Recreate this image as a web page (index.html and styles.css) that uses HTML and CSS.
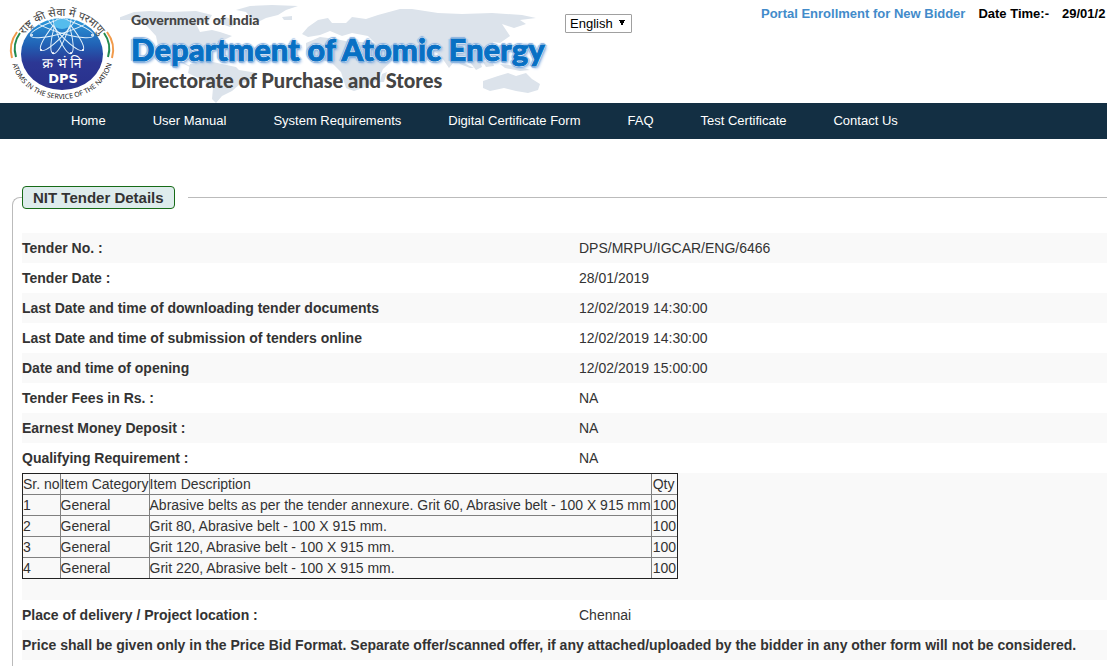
FILE: index.html
```html
<!DOCTYPE html>
<html lang="en">
<head>
<meta charset="utf-8">
<title>NIT Tender Details</title>
<link rel="stylesheet" href="styles.css">
</head>
<body>
<header class="top">
  <div class="brand">
    <svg class="map" viewBox="120 0 430 103" aria-hidden="true">
      <path d="M118 18 L134 12 L150 11 L170 12 L196 11 L212 15 L208 22 L196 24 L200 32 L212 30 L220 32 L232 36 L224 40 L216 43 L206 50 L199 54 L196 60 L188 57 L180 60 L188 65 L198 68 L190 67 L176 60 L166 54 L158 46 L156 36 L146 25 L134 20 L120 20Z"/>
      <path d="M236 10 L250 6 L272 5 L298 6 L286 10 L278 15 L266 18 L258 22 L250 17 L246 12Z M214 21 L226 17 L238 23 L230 27Z M282 17 L292 16 L292 20 L284 20Z"/>
      <path d="M190 64 L208 61 L222 64 L236 67 L239 70 L257 73 L251 80 L240 84 L232 91 L222 96 L216 103 L212 99 L213 88 L202 80 L188 73Z"/>
      <path d="M302 34 L308 27 L318 20 L328 18 L332 23 L346 23 L352 17 L366 19 L378 15 L400 9 L412 9 L438 13 L462 14 L492 13 L522 15 L536 18 L520 20 L526 24 L514 28 L502 24 L510 36 L500 43 L493 42 L496 51 L487 60 L479 58 L482 67 L476 70 L467 58 L458 57 L449 68 L440 55 L428 48 L416 52 L405 56 L390 47 L376 44 L368 36 L352 33 L342 36 L330 31 L320 35 L308 37Z"/>
      <path d="M306 43 L320 37 L336 39 L350 42 L372 42 L385 47 L394 59 L383 69 L378 80 L366 87 L354 91 L346 88 L341 72 L331 62 L314 59 L306 51Z"/>
      <path d="M483 81 L498 76 L508 73 L516 76 L526 73 L532 79 L540 84 L538 90 L528 93 L516 91 L504 88 L490 91 L483 88Z"/>
      <path d="M456 59 L466 64 L474 68 L470 68 L460 64Z M483 62 L492 60 L494 66 L486 67Z M500 64 L518 66 L530 70 L520 71 L505 68Z M382 74 L387 72 L384 82 L380 82Z"/>
    </svg>
    <svg class="emblem" viewBox="0 0 124 103" role="img" aria-label="DPS emblem">
      <defs>
        <linearGradient id="disk" x1="0" y1="0" x2="0" y2="1">
          <stop offset="0" stop-color="#2a9bdc"/><stop offset=".38" stop-color="#2160b4"/>
          <stop offset=".62" stop-color="#2c3794"/><stop offset="1" stop-color="#29308c"/>
        </linearGradient>
        <clipPath id="inside"><ellipse cx="62" cy="54" rx="41" ry="36"/></clipPath>
        <path id="upper" d="M17 57 A45 41 0 0 1 107 57"/>
        <path id="lower" d="M11 54 A51 45 0 0 0 113 54"/>
      </defs>
      <ellipse cx="62" cy="54" rx="41" ry="36" fill="url(#disk)"/>
      <g clip-path="url(#inside)">
        <g fill="none" stroke="#e4f2fb" stroke-width="1">
          <ellipse cx="62" cy="26" rx="33" ry="7" transform="rotate(17 62 26)"/>
          <ellipse cx="62" cy="26" rx="32" ry="7" transform="rotate(49 62 26)"/>
          <ellipse cx="62" cy="26" rx="29" ry="7" transform="rotate(72 62 26)"/>
          <ellipse cx="62" cy="26" rx="29" ry="7" transform="rotate(108 62 26)"/>
          <ellipse cx="62" cy="26" rx="32" ry="7" transform="rotate(131 62 26)"/>
          <ellipse cx="62" cy="26" rx="33" ry="7" transform="rotate(163 62 26)"/>
        </g>
        <ellipse cx="62" cy="24" rx="8" ry="5" fill="#55bced"/>
        <g fill="#fff">
          <circle cx="32" cy="35" r="1"/><circle cx="41" cy="50" r="1"/><circle cx="53" cy="53" r="1"/>
          <circle cx="71" cy="53" r="1"/><circle cx="83" cy="50" r="1"/><circle cx="92" cy="35" r="1"/>
        </g>
      </g>
      <g fill="none" stroke-width="2">
        <path d="M17 32 Q8 44 12 58 M107 32 Q116 44 112 58" stroke="#f19a4b"/>
        <path d="M20 33 Q12 44 16 57 M104 33 Q112 44 108 57" stroke="#238b50"/>
      </g>
      <text class="emblem-hindi" x="62" y="68">क्र भं नि</text>
      <text class="emblem-dps" x="63" y="83">DPS</text>
      <text class="emblem-upper"><textPath href="#upper" startOffset="50%">राष्ट्र की सेवा में परमाणु</textPath></text>
      <text class="emblem-lower"><textPath href="#lower" startOffset="50%">ATOMS IN THE SERVICE OF THE NATION</textPath></text>
    </svg>
    <div class="titles">
      <p class="gov">Government of India</p>
      <h1 class="dept">Department of Atomic Energy</h1>
      <p class="direct">Directorate of Purchase and Stores</p>
    </div>
  </div>
  <select class="language" aria-label="Language"><option>English</option></select>
  <div class="session">
    <a class="enroll" href="#">Portal Enrollment for New Bidder</a>
    <span>Date Time:-</span>
    <time class="clock">29/01/2</time>
  </div>
</header>
<nav class="menu">
  <a href="#">Home</a>
  <a href="#">User Manual</a>
  <a href="#">System Requirements</a>
  <a href="#">Digital Certificate Form</a>
  <a href="#">FAQ</a>
  <a href="#">Test Certificate</a>
  <a href="#">Contact Us</a>
</nav>
<main class="page">
  <fieldset class="details">
    <legend class="legend"><span class="legend-box">NIT Tender Details</span></legend>
    <div class="rows">
      <div class="row"><b>Tender No. :</b><span>DPS/MRPU/IGCAR/ENG/6466</span></div>
      <div class="row"><b>Tender Date :</b><span>28/01/2019</span></div>
      <div class="row"><b>Last Date and time of downloading tender documents</b><span>12/02/2019 14:30:00</span></div>
      <div class="row"><b>Last Date and time of submission of tenders online</b><span>12/02/2019 14:30:00</span></div>
      <div class="row"><b>Date and time of opening</b><span>12/02/2019 15:00:00</span></div>
      <div class="row"><b>Tender Fees in Rs. :</b><span>NA</span></div>
      <div class="row"><b>Earnest Money Deposit :</b><span>NA</span></div>
      <div class="row"><b>Qualifying Requirement :</b><span>NA</span></div>
      <div class="row row-items">
        <table class="items">
          <thead><tr><th>Sr. no</th><th>Item Category</th><th>Item Description</th><th>Qty</th></tr></thead>
          <tbody>
            <tr><td>1</td><td>General</td><td>Abrasive belts as per the tender annexure. Grit 60, Abrasive belt - 100 X 915 mm</td><td>100</td></tr>
            <tr><td>2</td><td>General</td><td>Grit 80, Abrasive belt - 100 X 915 mm.</td><td>100</td></tr>
            <tr><td>3</td><td>General</td><td>Grit 120, Abrasive belt - 100 X 915 mm.</td><td>100</td></tr>
            <tr><td>4</td><td>General</td><td>Grit 220, Abrasive belt - 100 X 915 mm.</td><td>100</td></tr>
          </tbody>
        </table>
      </div>
      <div class="row"><b>Place of delivery / Project location :</b><span>Chennai</span></div>
      <div class="row row-note"><b>Price shall be given only in the Price Bid Format. Separate offer/scanned offer, if any attached/uploaded by the bidder in any other form will not be considered.</b></div>
    </div>
  </fieldset>
</main>
</body>
</html>
```
FILE: styles.css
```css
* { box-sizing: border-box; }
body {
  margin: 0;
  background: #fff;
  color: #333;
  font: 14px/20px "Liberation Sans", Arial, sans-serif;
  overflow-x: hidden;
}
.top {
  display: flex;
  align-items: flex-start;
  height: 103px;
  overflow: hidden;
}
.brand {
  display: flex;
  position: relative;
  flex: 0 0 565px;
}
.map {
  position: absolute;
  left: 120px;
  top: 0;
  width: 430px;
  height: 103px;
  fill: #dce3eb;
}
.emblem { width: 124px; height: 103px; flex: none; }
.emblem text { text-anchor: middle; }
.emblem-hindi { font: 14px "Noto Sans Devanagari", "Noto Sans", sans-serif; fill: #fff; }
.emblem-dps { font: bold 13px "DejaVu Sans", sans-serif; fill: #fff; }
.emblem-upper { font: 11px "Noto Sans Devanagari", "Noto Sans", sans-serif; fill: #444; }
.emblem-lower { font: 7px "Noto Sans", sans-serif; fill: #222; }
.titles {
  position: relative;
  padding: 12px 0 0 7px;
  font-family: "Lato Black", Lato, sans-serif;
  font-weight: 900;
  white-space: nowrap;
  color: #444;
}
.titles p, .titles h1 { margin: 0; }
.gov { font-size: 14px; line-height: 16px; }
.dept {
  font-size: 31px;
  line-height: 42px;
  font-weight: 900;
  color: #0870c4;
  -webkit-text-stroke: 1px #0870c4;
  text-shadow: 1px 0 #fff, -1px 0 #fff, 0 1px #fff, 0 -1px #fff,
    2px 0 1px #8bb2e0, -2px 0 1px #8bb2e0, 0 2px 1px #8bb2e0, 0 -2px 1px #8bb2e0, 2px 2px 3px #8bb2e0;
}
.direct { font-size: 20px; line-height: 20px; }
.language {
  appearance: none;
  flex: none;
  width: 67px;
  height: 19px;
  margin-top: 14px;
  padding: 0 4px;
  border: 1px solid #a0a0a0;
  border-radius: 1px;
  color: #000;
  font: 13px/17px "Liberation Sans", Arial, sans-serif;
  background:
    linear-gradient(to bottom right, #000 50%, transparent 50%) 56px 5px / 3px 6px no-repeat,
    linear-gradient(to bottom left, #000 50%, transparent 50%) 53px 5px / 3px 6px no-repeat,
    #fff;
}
.session {
  display: flex;
  gap: 13px;
  margin-left: 129px;
  padding-top: 4px;
  font-size: 13px;
  font-weight: bold;
  color: #000;
  white-space: nowrap;
}
.enroll { color: #428bca; text-decoration: none; }
.menu {
  display: flex;
  gap: 47px;
  padding: 0 71px;
  background: #132f43;
  font-size: 13px;
  line-height: 36px;
  white-space: nowrap;
}
.menu a { color: #fff; text-decoration: none; }
.page { padding: 47px 0 0 12px; }
.details {
  min-width: 0;
  margin: 0;
  padding: 24px 0 20px 9px;
  border: 1px solid #bbb;
  border-right: 0;
  border-radius: 8px 0 0 8px;
}
.legend { padding: 0 13px 0 0; }
.legend-box {
  display: block;
  padding: 0 10px;
  border: 1px solid #176b17;
  border-radius: 4px;
  background: #deecec;
  font-size: 15px;
  line-height: 21px;
  font-weight: bold;
}
.row {
  display: grid;
  grid-template-columns: 557px 1fr;
  line-height: 30px;
  white-space: nowrap;
}
.row:nth-child(odd) { background: #f9f9f9; }
.row-items { padding-bottom: 21px; }
.row-note { display: block; }
.items {
  justify-self: start;
  border-collapse: collapse;
  border: 1px solid #222;
  line-height: 20px;
  outline: 1px solid #222;
  outline-offset: -1px;
}
.items th, .items td {
  padding: 0;
  border: 1px solid #808080;
  font-weight: normal;
  text-align: left;
}
.items th:last-child, .items td:last-child { padding: 0 1px; }
```
